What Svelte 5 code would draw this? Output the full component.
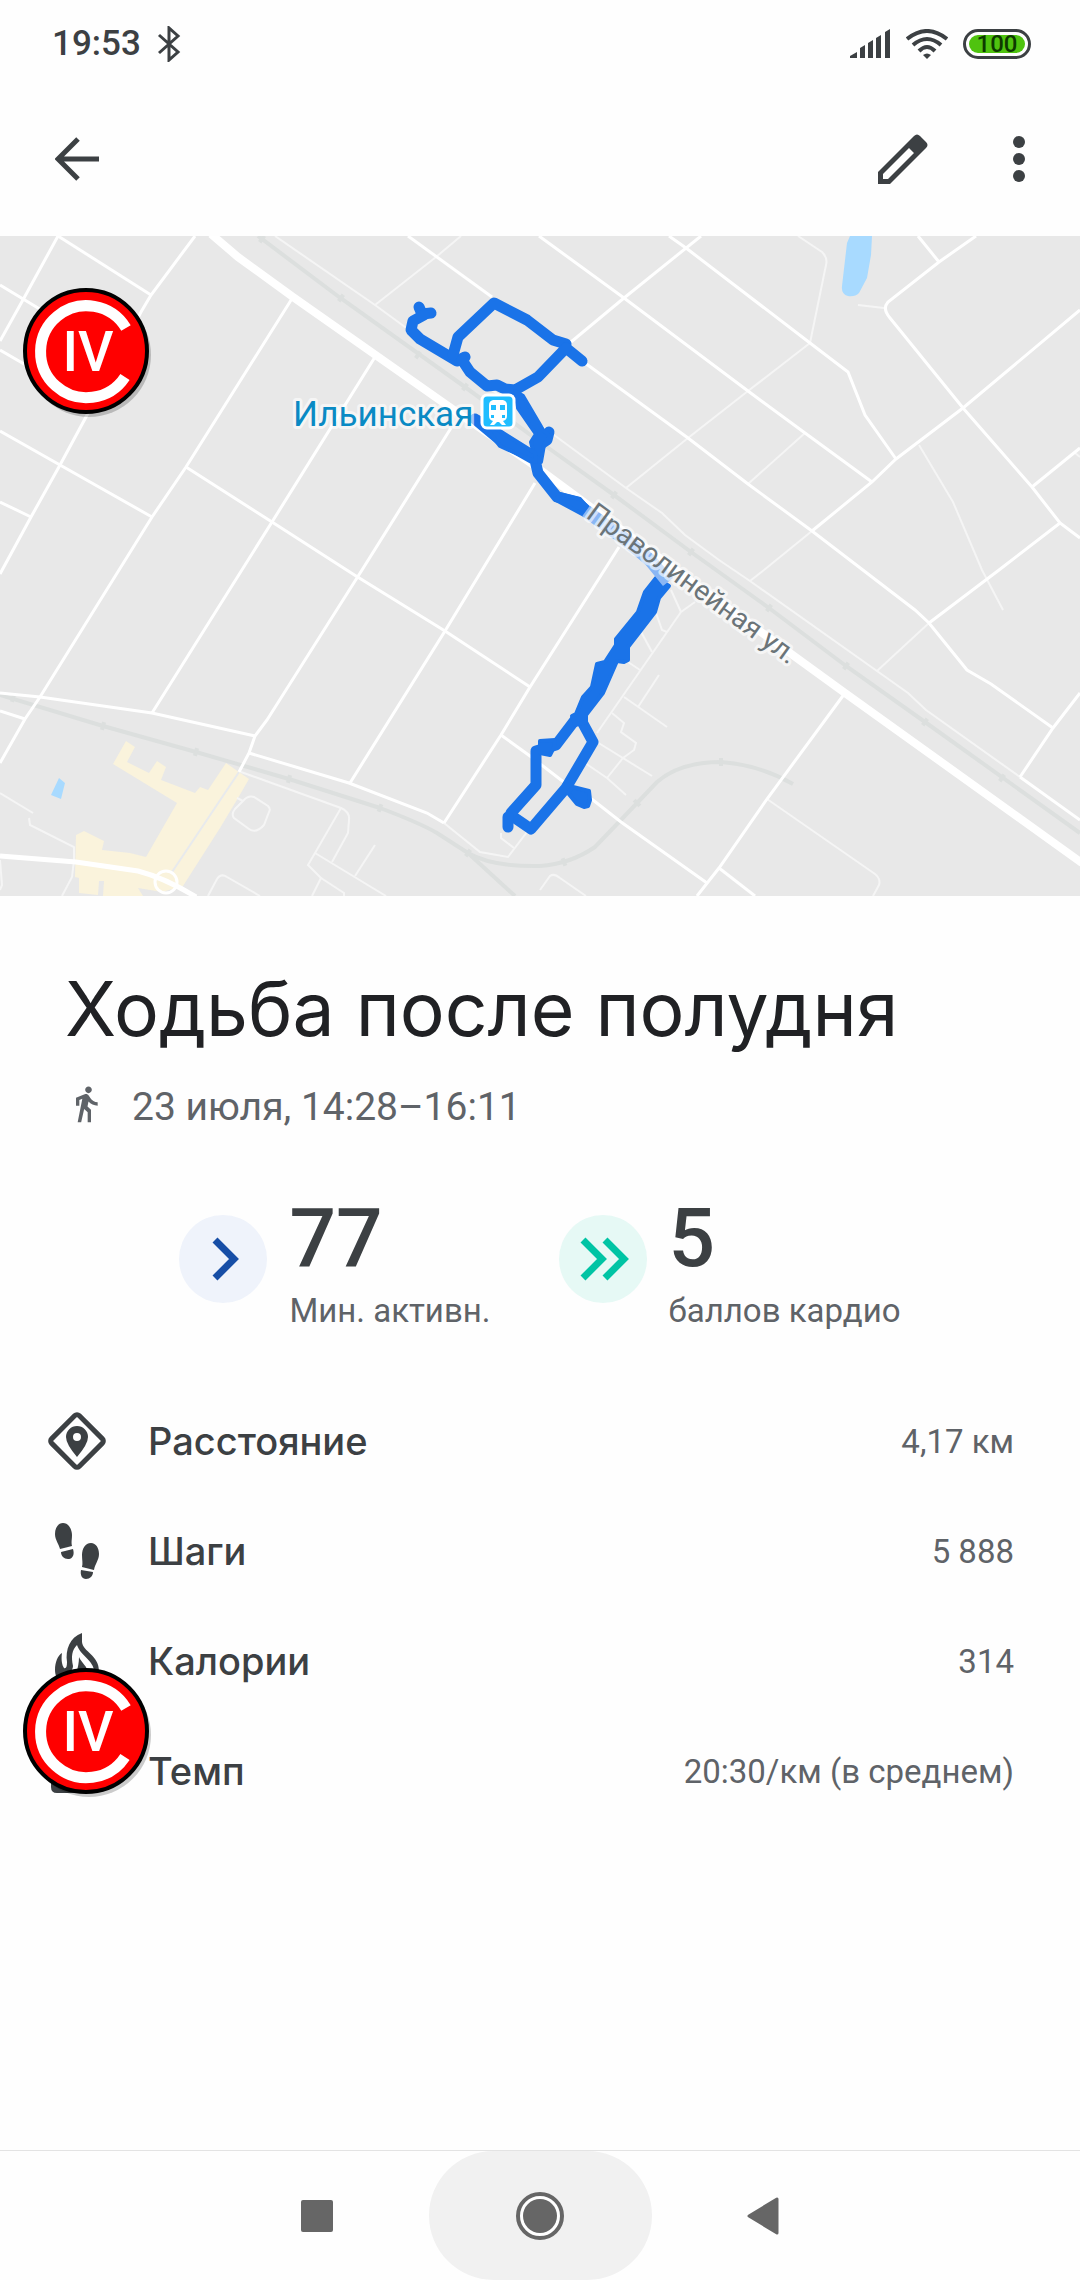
<script>
    export let time = '19:53';
    export let battery = 100;
    export let title = 'Ходьба после полудня';
    export let date = '23 июля, 14:28–16:11';

    const stats = [
        { kind: 'active', value: '77', label: 'Мин. активн.', chevrons: [34] },
        { kind: 'cardio', value: '5', label: 'баллов кардио', chevrons: [22, 44] },
    ];

    const details = [
        { icon: 'distance', label: 'Расстояние', value: '4,17 км' },
        { icon: 'steps', label: 'Шаги', value: '5 888' },
        { icon: 'calories', label: 'Калории', value: '314' },
        { icon: 'pace', label: 'Темп', value: '20:30/км (в среднем)' },
    ];

    // map geometry, y runs from 236 to 896
    const streets = [
        'M58 236L24 298L0 341',
        'M58 236L151 295',
        'M0 285L38 308L86 336',
        'M195 236L151 295L141 312L86 417L60 465L31 517L0 574',
        'M0 350L86 400',
        'M0 431L60 465L152 517',
        'M0 502L31 517',
        'M293 297L186 467L152 517L40 697L25 719L0 763',
        'M186 467L272 522L356 576L445 631L530 687',
        'M375 357L272 522L152 713',
        'M451 428L362 570L267 720L255 736L249 753L239 772',
        'M535 483L445 631L350 783',
        'M619 547L530 687L501 735L444 823',
        'M501 735L530 756L561 780L593 800L621 822L707 883',
        'M0 693L40 697L152 713L255 736',
        'M249 753L349 783L427 813L444 823',
        'M0 711L25 719',
        'M408 236L492 297',
        'M585 363L688 438L748 484L812 531L915 610L929 623L967 670L991 684L1053 728',
        'M539 236L624 298L748 391L805 433L872 482',
        'M669 236L686 248L810 343L848 372L865 415L896 459',
        'M701 236L624 298L571 342',
        'M976 236L939 262L888 302Q882 309 890 318L963 408L1032 487L1060 523L1080 538',
        'M918 236L939 262',
        'M1080 310L963 408L896 459L872 482L812 531',
        'M1032 487L1080 448',
        'M1060 523L999 570L929 623',
        'M1080 693L1053 728L1020 777',
        'M845 693L767 799L719 868L697 896',
        'M719 868L755 896',
        'M1020 777L1080 820',
    ];

    const lanes = [
        'M275 236L375 305L405 327L554 435L626 488L662 513L685 535L719 560L750 581L877 671L908 693L926 710L1020 777',
        'M375 305L436 257L461 236',
        'M798 236L822 252Q828 258 826 265L810 343L748 391L688 438L626 488',
        'M805 433L748 484',
        'M858 305L884 308',
        'M812 531L764 570L750 581',
        'M919 445L953 502L982 570L1003 610',
        'M929 623L877 671',
        'M767 799L875 874Q881 879 879 885L873 896',
        'M695 602L681 612L597 733',
        'M671 590L681 612',
        'M655 610L662 630L667 632',
        'M640 630L652 652',
        'M628 662L640 670',
        'M659 675L638 707',
        'M624 697L667 727',
        'M612 713L624 723L621 732L636 743L634 750L623 758L607 778',
        'M597 742L652 776',
        'M585 763L607 778L626 795',
        'M540 890L550 876Q554 873 560 878L586 896',
        'M557 750L574 727',
        'M444 823L480 852L508 857L527 832',
        'M241 772L341 808Q350 812 349 820L348 833L332 862',
        'M341 808L315 853L308 865L321 878L312 896',
        'M315 853L386 896',
        'M321 878L344 893V896',
        'M375 845L355 876',
        'M208 896L217 879Q221 873 227 877L260 896',
        'M237 798L243 801Q248 795 254 797L268 806Q271 809 269 812L264 825Q256 834 249 829L234 818Q231 814 235 809L243 801',
        'M0 793L33 813',
        'M29 818L30 825L74 847V860L72 877L62 896',
        'M0 860L2 885L0 890',
        'M501 833L501 838L514 848',
        'M1075 453L1080 457',
    ];

    const rails = [
        'M258 236L339 297L465 387L547 447L614 495L691 552L769 608L846 666L925 722L1080 833',
        'M0 695L103 726L196 752L289 779L380 808Q420 823 437 833L468 853Q492 867 540 866Q570 864 595 847L619 822L657 782Q680 762 721 762Q760 765 793 784',
        'M468 853L515 896',
    ];

    const stops = [
        [262, 239, 36], [341, 298, 36], [418, 355, 36], [465, 387, 36], [614, 495, 36], [691, 552, 36],
        [769, 608, 36], [846, 666, 36], [925, 722, 36], [1002, 778, 36],
        [13, 698, 16], [103, 726, 16], [196, 752, 16], [289, 779, 16], [380, 808, 20],
        [468, 853, 36], [564, 862, -20], [637, 803, -45], [721, 762, 0],
    ];

    const route = [
        'M419 307L422 314L431 313',
        'M424 315L413 321L411 330L420 339L457 361L465 357',
        'M453 355L458 337L494 303L527 320L553 340L566 344',
        'M566 348L582 361',
        'M566 348L538 377L515 390L505 389L497 385L487 386L470 372L462 360',
        'M475 419L500 440L535 460L538 473L557 497L577 502L586 510',
        'M549 432L547 440L538 446',
        'M580 718L593 742L566 788L531 829L512 816',
        'M575 720L556 745L536 751V785L511 813',
        'M508 817V827',
    ];

    const routeFills = [
        'M515 391L523 396L543 430L550 436L544 445L541 462L534 455L531 442L536 434L518 408Z',
        'M478 417L503 433L535 453L536 462L500 446Z',
        'M560 494L580 499L588 508L584 515L556 500Z',
        'M656 578L669 586L659 598L655 612L628 647L628 660L624 662L617 661L603 693L586 715V722L575 725L572 716L576 714L583 697L592 687L597 664L605 662L616 645V639L638 612L645 592Z',
        'M540 741L555 740L554 747L550 755L540 753Z',
        'M573 787L589 791L590 800L588 806L584 807L577 804L568 793Z',
    ];
</script>

{#snippet badge()}
    <svg class="badge" viewBox="0 0 132 132" role="img" aria-label="IV">
        <circle cx="68" cy="68" r="62" fill="#000" opacity=".2" />
        <circle cx="65" cy="64" r="61" fill="#f00" stroke="#000" stroke-width="4" />
        <path d="M105 41A46 46 0 1 0 104 90" fill="none" stroke="#fff" stroke-width="11" />
        <text x="67" y="84" text-anchor="middle">IV</text>
    </svg>
{/snippet}

<div class="screen">
    <div class="status">
        <span class="time">{time}</span>
        <svg class="bluetooth" viewBox="0 0 24 36" width="24" height="36">
            <path d="M2 9L21 26L12 34V2L21 10L2 27" />
        </svg>
        <div class="indicators">
            <svg viewBox="0 0 42 30" width="42" height="30">
                <path d="M1 29V27L8 23V29ZM11 29V19L16 16V29ZM19 29V14L24 11V29ZM27 29V9L32 6V29ZM36 29V3L41 0V29Z" fill="#3c4043" />
            </svg>
            <svg viewBox="0 0 42 30" width="42" height="30" fill="none" stroke="#3c4043" stroke-width="4">
                <path d="M1 10Q21 -6 41 10M7 16Q21 4 35 16M13 22Q21 14 29 22" />
                <path d="M17 26Q21 23 25 26L21 30Z" fill="#3c4043" stroke="none" />
            </svg>
            <span class="battery"><span>{battery}</span></span>
        </div>
    </div>

    <header>
        <button type="button" aria-label="Назад">
            <svg viewBox="0 0 44 44" width="44" height="44" fill="none" stroke="#3c4043" stroke-width="5">
                <path d="M23 2L3 22L23 42M3 22H44" />
            </svg>
        </button>
        <div class="actions">
            <button type="button" aria-label="Изменить">
                <svg viewBox="0 0 50 50" width="50" height="50">
                    <path fill="#3c4043" fill-rule="evenodd" d="M0 50V38L36 2Q39 -1 42 2L48 8Q51 11 48 14L12 50ZM5 45H10L36 19L31 14L5 40Z" />
                </svg>
            </button>
            <button type="button" aria-label="Ещё">
                <svg viewBox="0 0 12 46" width="12" height="46" fill="#3c4043">
                    <circle cx="6" cy="6" r="6" />
                    <circle cx="6" cy="23" r="6" />
                    <circle cx="6" cy="40" r="6" />
                </svg>
            </button>
        </div>
    </header>

    <div class="map">
        <svg class="tiles" viewBox="0 236 1080 660">
            <rect y="236" width="1080" height="660" fill="#e8e8e8" />
            <path fill="#faf3dc" d="M126 741L135 747L127 762L149 773L157 761L166 767L161 780L195 793L200 787L208 790L226 763L249 779L238 798L229 813L220 828L183 886L162 892L138 888L143 896H103L104 881H99L98 895L79 893V878L75 877L76 835L84 831L104 841L102 850L130 853L146 857L177 803L113 764Z" />
            <path fill="#a8daff" d="M59 778L65 783L61 799L51 795ZM850 236H872L871 255L867 278L859 293Q855 297 848 296Q841 294 842 286L847 243Z" />
            <g fill="none" stroke="#f5f5f5" stroke-width="2">
                {#each lanes as d}
                    <path {d} />
                {/each}
                <path d="M239 772L172 872" stroke="#e8eaed" />
            </g>
            <g fill="none" stroke="#dcdfde" stroke-width="4">
                {#each rails as d}
                    <path {d} />
                {/each}
                {#each stops as [x, y, angle]}
                    <path d="M0 -4V4" transform="translate({x} {y}) rotate({angle})" />
                {/each}
            </g>
            <g fill="none" stroke="#fff" stroke-width="3">
                {#each streets as d}
                    <path {d} />
                {/each}
                <circle cx="166" cy="882" r="11" />
            </g>
            <path fill="none" stroke="#fff" stroke-width="5" d="M0 856L76 862L138 871Q165 878 196 897" />
            <path fill="none" stroke="#fff" stroke-width="8" d="M211 234L238 257L293 297L451 408L535 466L692 582L845 693L1082 863" />

            <g class="route">
                {#each route as d}
                    <path {d} fill="none" stroke-width="11" />
                {/each}
                {#each routeFills as d}
                    <path {d} fill="#1a73e8" stroke-width="4" />
                {/each}
            </g>
            <path fill="none" stroke="#8ab6f4" stroke-width="13" d="M586 511L626 540L650 560L668 582" />

            <text class="street" transform="translate(585 517) rotate(36)">Праволинейная ул.</text>
            <text class="station" x="293" y="426">Ильинская</text>
            <rect x="482" y="395" width="32" height="33" rx="5" fill="#1fbdff" stroke="#fff" stroke-width="3" />
            <path fill="#fff" fill-rule="evenodd" d="M493 400H503Q507 401 507 405V416Q507 420 503 421L506 425H502L499 422H497L494 425H490L493 421Q489 420 489 416V405Q489 401 493 400ZM491 405V410H496V405ZM500 405V410H505V405ZM491 415V418H494V415ZM502 415V418H505V415Z" />
        </svg>
        {@render badge()}
    </div>

    <main>
        <h1>{title}</h1>
        <p class="date">
            <svg viewBox="0 0 24 24" width="40" height="40" fill="#5f6368">
                <path d="M13.5 5.5c1.1 0 2-.9 2-2s-.9-2-2-2-2 .9-2 2 .9 2 2 2zM9.800 8.900L7 23h2.100l1.800-8 2.100 2v6h2v-7.500l-2.100-2 .6-3C14.800 12 16.800 13 19 13v-2c-1.900 0-3.500-1-4.300-2.400l-1-1.600c-.4-.6-1-1-1.700-1-.3 0-.5.1-.8.1L6 8.300V13h2V9.600l1.800-.7" />
            </svg>
            <span>{date}</span>
        </p>

        <div class="stats">
            {#each stats as stat}
                <div class="stat {stat.kind}">
                    <svg viewBox="0 0 88 88" width="88" height="88">
                        <circle cx="44" cy="44" r="44" />
                        {#each stat.chevrons as x}
                            <path d="M{x + 2} 25L{x + 21} 44L{x + 2} 63" />
                        {/each}
                    </svg>
                    <div>
                        <div class="value">{stat.value}</div>
                        <div class="caption">{stat.label}</div>
                    </div>
                </div>
            {/each}
        </div>

        <dl>
            {#each details as row}
                <div class="row">
                    <dt>
                        <svg viewBox="0 0 58 58" width="58" height="58" fill="#3c4043">
                            {#if row.icon === 'distance'}
                                <rect x="9.5" y="9.5" width="39" height="39" rx="3" transform="rotate(45 29 29)" fill="none" stroke="#3c4043" stroke-width="5" />
                                <path fill-rule="evenodd" d="M29 45Q18 32 18 25A11 11 0 0 1 40 25Q40 32 29 45ZM29 21A4 4 0 0 0 29 29A4 4 0 0 0 29 21Z" />
                            {:else if row.icon === 'steps'}
                                <path d="M15 1C21 1 24 8 24 13C24 18 23 20 24 24L12 27C11 22 7 18 7 12C7 6 10 1 15 1ZM13 30L25 27C27 33 24 37 20 37C16 37 13 34 13 30Z" />
                                <path d="M43 21C48 21 51 26 51 32C51 38 47 42 46 48L34 45C35 41 34 38 34 33C34 27 37 21 43 21ZM33 48L45 50C45 54 42 57 38 57C34 57 32 53 33 48Z" />
                            {:else if row.icon === 'calories'}
                                <path fill-rule="evenodd" d="M34 1V10C35 20 51 23 51 39C51 49 41 56 29 56C17 56 7 49 7 38C7 30 10 23 14 21C13 28 14 33 16 36C18 37 19 35 19 30C17 18 22 5 34 1ZM29 13C24 18 23 24 25 34C25 38 21 42 17 42C18 48 24 51 29 51C39 51 46 46 46 39C46 29 32 23 29 13ZM31 25C33 30 40 35 40 41C40 46 35 49 29 49C26 43 31 37 31 25Z" />
                            {:else}
                                <path fill-rule="evenodd" d="M9 8H45Q51 8 51 14V45Q51 51 45 51H9Q3 51 3 45V14Q3 8 9 8ZM9 14V45H45V14Z" />
                                <path d="M18 18H23V41H18ZM32 18H37V41H32Z" />
                            {/if}
                        </svg>
                        {row.label}
                    </dt>
                    <dd>{row.value}</dd>
                </div>
            {/each}
            <div class="mark">{@render badge()}</div>
        </dl>
    </main>

    <nav>
        <button type="button" aria-label="Недавние">
            <svg viewBox="0 0 32 32" width="32" height="32"><rect width="32" height="32" rx="2" fill="#666" /></svg>
        </button>
        <button type="button" class="home" aria-label="Домой">
            <svg viewBox="0 0 50 50" width="50" height="50">
                <circle cx="25" cy="25" r="22" fill="#fff" stroke="#666" stroke-width="4" />
                <circle cx="25" cy="25" r="17" fill="#666" />
            </svg>
        </button>
        <button type="button" aria-label="Назад">
            <svg viewBox="0 0 32 38" width="32" height="38">
                <path d="M2 19L30 2V36Z" fill="#666" stroke="#666" stroke-width="3" stroke-linejoin="round" />
            </svg>
        </button>
    </nav>
</div>

<style>
    :global(body) {
        margin: 0;
        background: #fefefe;
    }

    .screen {
        display: flex;
        flex-direction: column;
        min-height: 100vh;
        font-family: Roboto, "Noto Sans", sans-serif;
        color: #3c4043;
    }

    svg {
        display: block;
        flex: none;
    }

    button {
        padding: 0;
        border: none;
        background: none;
    }

    .status {
        display: flex;
        align-items: center;
        height: 88px;
        padding: 0 49px 0 52px;
    }

    .time {
        font-size: 35px;
        font-weight: 500;
        line-height: 40px;
    }

    .bluetooth {
        margin-left: 16px;
        fill: none;
        stroke: #3c4043;
        stroke-width: 3;
    }

    .indicators {
        display: flex;
        align-items: center;
        gap: 15px;
        margin-left: auto;
    }

    .battery {
        box-sizing: border-box;
        width: 68px;
        height: 30px;
        padding: 3px;
        border: 3px solid #3c4043;
        border-radius: 15px;
    }

    .battery span {
        display: block;
        border-radius: 9px;
        background: #4fc30f;
        color: #0d3a00;
        font-size: 24px;
        font-weight: 500;
        line-height: 18px;
        text-align: center;
    }

    header {
        display: flex;
        align-items: center;
        justify-content: space-between;
        height: 142px;
        margin-bottom: 6px;
        padding: 0 55px;
    }

    .actions {
        display: flex;
        align-items: center;
        gap: 85px;
    }

    .map {
        position: relative;
    }

    .tiles {
        width: 100%;
    }

    .route {
        stroke: #1a73e8;
        stroke-linecap: round;
        stroke-linejoin: round;
    }

    .street,
    .station {
        paint-order: stroke;
        stroke: #fff;
        stroke-opacity: .6;
        stroke-width: 6px;
        stroke-linejoin: round;
    }

    .street {
        font-size: 28px;
        fill: #6b7478;
    }

    .station {
        font-size: 35px;
        fill: #0a8ac4;
    }

    .badge {
        position: absolute;
        top: 51px;
        left: 21px;
        width: 132px;
        height: 132px;
    }

    .badge text {
        font-size: 55px;
        font-weight: 500;
        fill: #fff;
    }

    h1 {
        margin: 65px 65px 22px;
        color: #202124;
        font-family: Inter, sans-serif;
        font-size: 75px;
        font-weight: 400;
        line-height: 96px;
    }

    .date {
        display: flex;
        align-items: center;
        gap: 26px;
        margin: 0 66px 63px;
        color: #5f6368;
        font-size: 39px;
        line-height: 56px;
    }

    .date svg {
        margin-bottom: 6px;
    }

    .stats {
        display: flex;
        justify-content: center;
        gap: 68px;
    }

    .stat {
        display: flex;
        gap: 22px;
    }

    .stat svg {
        margin-top: 17px;
    }

    .stat path {
        fill: none;
        stroke-width: 7;
    }

    .active circle {
        fill: #eff3fb;
    }

    .active path {
        stroke: #174ea6;
    }

    .cardio circle {
        fill: #e6f9f5;
    }

    .cardio path {
        stroke: #00c4a4;
    }

    .value {
        font-size: 82px;
        font-weight: 500;
        line-height: 80px;
    }

    .caption {
        margin-top: 11px;
        color: #5f6368;
        font-size: 33px;
        line-height: 44px;
    }

    dl {
        position: relative;
        margin: 53px 0 0;
    }

    .row {
        display: flex;
        align-items: center;
        justify-content: space-between;
        height: 110px;
        padding: 0 66px 0 48px;
    }

    dt {
        display: flex;
        align-items: center;
        gap: 42px;
        font-family: Inter, sans-serif;
        font-size: 38px;
        font-weight: 500;
    }

    dd {
        margin: 0;
        color: #5f6368;
        font-size: 33px;
    }

    .mark {
        position: absolute;
        top: 230px;
        left: 0;
    }

    nav {
        display: flex;
        justify-content: center;
        height: 129px;
        margin-top: auto;
        border-top: 1px solid #e3e3e3;
    }

    nav button {
        display: flex;
        align-items: center;
        justify-content: center;
        width: 223px;
    }

    .home {
        border-radius: 65px;
        background: #f1f1f1;
    }
</style>
